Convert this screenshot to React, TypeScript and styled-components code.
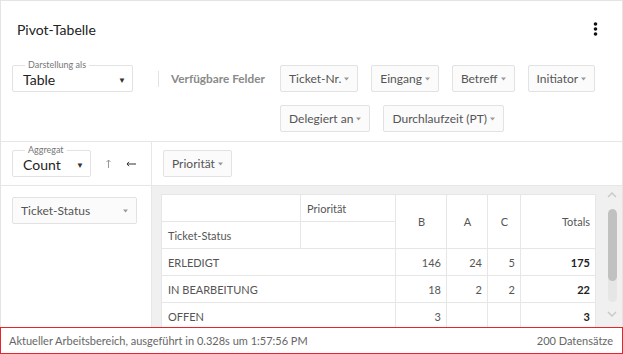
import React from "react";
import styled, { createGlobalStyle } from "styled-components";

const GlobalStyle = createGlobalStyle`
  html, body {
    margin: 0;
    padding: 0;
    background: #fff;
  }
  body {
    font-family: Lato, "Open Sans", sans-serif;
    color: #333;
  }
  #root {
    width: 623px;
    height: 354px;
    overflow: hidden;
  }
`;

const Page = styled.div`
  width: 623px;
  height: 354px;
  display: flex;
  flex-direction: column;
`;

const Card = styled.div`
  flex: 0 0 327px;
  box-sizing: border-box;
  border: 1px solid #e4e4e4;
  border-bottom: none;
  display: flex;
  flex-direction: column;
  overflow: hidden;
`;

const Header = styled.div`
  flex: 0 0 56px;
  display: flex;
  align-items: center;
  justify-content: space-between;
  padding: 0 24px 0 16px;
`;

const Title = styled.h1`
  margin: 0;
  font-size: 14px;
  font-weight: 400;
  color: #222;
`;

const Toolbar = styled.div`
  display: flex;
  align-items: flex-start;
  padding: 8px 12px 9px 11px;
  border-bottom: 1px solid #e6e6e6;
`;

const SelectBox = styled.div<{ $w: number }>`
  position: relative;
  box-sizing: border-box;
  width: ${(p) => p.$w}px;
  height: 27px;
  flex: none;
  border: 1px solid #e2e2e2;
  border-radius: 2px;
  display: flex;
  align-items: center;
  justify-content: space-between;
  padding: 2px 6px 0 10px;
  font-size: 14px;
  color: #222;
`;

const SelectLabel = styled.span`
  position: absolute;
  top: -7px;
  left: 12px;
  padding: 0 3px;
  background: #fff;
  font-size: 9px;
  line-height: 12px;
  color: #777;
`;

const SelectArrow = styled.span`
  font-size: 8px;
  color: #333;
`;

const Divider = styled.div`
  flex: none;
  width: 1px;
  height: 16px;
  margin: 6px 0 0 25px;
  background: #e2e2e2;
`;

const FieldsLabel = styled.div`
  flex: none;
  width: 109px;
  padding-left: 12px;
  line-height: 27px;
  font-size: 11.8px;
  font-weight: 700;
  color: #8a8a8a;
`;

const Chips = styled.div`
  flex: 1;
  display: flex;
  flex-wrap: wrap;
  gap: 13px;
`;

const Chip = styled.div<{ $w?: number }>`
  box-sizing: border-box;
  height: 27px;
  ${(p) => (p.$w ? `width: ${p.$w}px;` : "")}
  display: inline-flex;
  align-items: center;
  justify-content: space-between;
  padding: 0 8px;
  border: 1px solid #e2e2e2;
  border-radius: 2px;
  background: #fbfbfb;
  font-size: 12px;
  color: #555;
  white-space: nowrap;

  svg {
    margin-left: 3px;
    flex: none;
  }
`;

const Section = styled.div<{ $grow?: boolean }>`
  display: flex;
  ${(p) => (p.$grow ? "flex: 1; min-height: 0;" : "flex: none; border-bottom: 1px solid #e6e6e6;")}
`;

const SideCol = styled.div<{ $pt: number }>`
  flex: 0 0 151px;
  box-sizing: border-box;
  border-right: 1px solid #e6e6e6;
  padding: ${(p) => p.$pt}px 12px 8px 11px;
  display: flex;
  align-items: flex-start;
`;

const MainCol = styled.div`
  flex: 1;
  padding: 8px 11px;
  display: flex;
  align-items: flex-start;
`;

const SortButton = styled.span<{ $gap: number }>`
  display: flex;
  align-items: center;
  height: 27px;
  margin-left: ${(p) => p.$gap}px;
`;

const GrayArea = styled.div`
  flex: 1;
  min-width: 0;
  background: #f0f0f0;
  display: flex;
  overflow: hidden;
`;

const TableWrap = styled.div`
  flex: none;
  padding: 8px 0 0 9px;
  overflow: hidden;
`;

const PivotTable = styled.table`
  border-collapse: collapse;
  table-layout: fixed;
  width: 434px;
  background: #fff;
  font-size: 11px;
  color: #555;
`;

const Col = styled.col<{ $w: number }>`
  width: ${(p) => p.$w}px;
`;

const Cell = styled.td<{ $align?: string; $bold?: boolean }>`
  height: 27px;
  box-sizing: border-box;
  padding: 0 5px 0 6px;
  border: 1px solid #e6e6e6;
  text-align: ${(p) => p.$align || "left"};
  font-weight: ${(p) => (p.$bold ? 700 : 400)};
  color: ${(p) => (p.$bold ? "#222" : "#555")};
  white-space: nowrap;
  overflow: hidden;
`;

const HeadCell = styled(Cell).attrs({ as: "th" })``;

const ScrollBar = styled.div`
  flex: 0 0 28px;
  display: flex;
  flex-direction: column;
  align-items: center;
  padding: 6px 0 0 4px;
  box-sizing: border-box;
`;

const Track = styled.div`
  width: 9px;
  height: 93px;
  margin: 11px 0 9px;
  border-radius: 5px;
  background: #e6e6e6;
  overflow: hidden;
`;

const Thumb = styled.div`
  height: 72px;
  border-radius: 5px;
  background: #c1c1c1;
`;

const Footer = styled.div`
  flex: 0 0 27px;
  box-sizing: border-box;
  border: 1px solid #e8232b;
  display: flex;
  align-items: center;
  justify-content: space-between;
  padding: 0 9px 0 8px;
  font-size: 11px;
  color: #666;
`;

const Kebab = () => (
  <svg width="5" height="14" viewBox="0 0 5 14">
    <circle cx="2.5" cy="2" r="1.8" fill="#111" />
    <circle cx="2.5" cy="7" r="1.8" fill="#111" />
    <circle cx="2.5" cy="12" r="1.8" fill="#111" />
  </svg>
);

const Caret = () => (
  <svg width="5" height="4" viewBox="0 0 5 4">
    <path d="M0 0.5 H5 L2.5 3.5 Z" fill="#999" />
  </svg>
);

const ArrowUp = () => (
  <svg width="5" height="9" viewBox="0 0 5 9">
    <path d="M2.5 9 V1 M0.5 3 L2.5 1 L4.5 3" fill="none" stroke="#999" strokeWidth="1" />
  </svg>
);

const ArrowLeft = () => (
  <svg width="10" height="6" viewBox="0 0 10 6">
    <path d="M10 3 H1 M3 0.8 L1 3 L3 5.2" fill="none" stroke="#333" strokeWidth="1" />
  </svg>
);

const Chevron = ({ down }: { down?: boolean }) => (
  <svg width="10" height="6" viewBox="0 0 10 6">
    <path
      d={down ? "M1 1 L5 5 L9 1" : "M1 5 L5 1 L9 5"}
      fill="none"
      stroke="#c8c8c8"
      strokeWidth="1.4"
    />
  </svg>
);

const fields = ["Ticket-Nr.", "Eingang", "Betreff", "Initiator", "Delegiert an", "Durchlaufzeit (PT)"];

const rows = [
  { label: "ERLEDIGT", b: "146", a: "24", c: "5", total: "175" },
  { label: "IN BEARBEITUNG", b: "18", a: "2", c: "2", total: "22" },
  { label: "OFFEN", b: "3", a: "", c: "", total: "3" },
];

export default function App() {
  return (
    <Page>
      <GlobalStyle />
      <Card>
        <Header>
          <Title>Pivot-Tabelle</Title>
          <Kebab />
        </Header>
        <Toolbar>
          <SelectBox $w={121}>
            <SelectLabel>Darstellung als</SelectLabel>
            Table
            <SelectArrow>▼</SelectArrow>
          </SelectBox>
          <Divider />
          <FieldsLabel>Verfügbare Felder</FieldsLabel>
          <Chips>
            {fields.map((f) => (
              <Chip key={f}>
                {f}
                <Caret />
              </Chip>
            ))}
          </Chips>
        </Toolbar>
        <Section>
          <SideCol $pt={8}>
            <SelectBox $w={79}>
              <SelectLabel>Aggregat</SelectLabel>
              Count
              <SelectArrow>▼</SelectArrow>
            </SelectBox>
            <SortButton $gap={15}>
              <ArrowUp />
            </SortButton>
            <SortButton $gap={15}>
              <ArrowLeft />
            </SortButton>
          </SideCol>
          <MainCol>
            <Chip>
              Priorität
              <Caret />
            </Chip>
          </MainCol>
        </Section>
        <Section $grow>
          <SideCol $pt={11}>
            <Chip $w={125}>
              Ticket-Status
              <Caret />
            </Chip>
          </SideCol>
          <GrayArea>
            <TableWrap>
              <PivotTable>
                <colgroup>
                  <Col $w={139} />
                  <Col $w={95} />
                  <Col $w={51} />
                  <Col $w={41} />
                  <Col $w={33} />
                  <Col $w={75} />
                </colgroup>
                <thead>
                  <tr>
                    <HeadCell />
                    <HeadCell>Priorität</HeadCell>
                    <HeadCell rowSpan={2} $align="center">B</HeadCell>
                    <HeadCell rowSpan={2} $align="center">A</HeadCell>
                    <HeadCell rowSpan={2} $align="center">C</HeadCell>
                    <HeadCell rowSpan={2} $align="right">Totals</HeadCell>
                  </tr>
                  <tr>
                    <HeadCell>Ticket-Status</HeadCell>
                    <HeadCell />
                  </tr>
                </thead>
                <tbody>
                  {rows.map((r) => (
                    <tr key={r.label}>
                      <HeadCell colSpan={2}>{r.label}</HeadCell>
                      <Cell $align="right">{r.b}</Cell>
                      <Cell $align="right">{r.a}</Cell>
                      <Cell $align="right">{r.c}</Cell>
                      <Cell $align="right" $bold>{r.total}</Cell>
                    </tr>
                  ))}
                </tbody>
              </PivotTable>
            </TableWrap>
            <ScrollBar>
              <Chevron />
              <Track>
                <Thumb />
              </Track>
              <Chevron down />
            </ScrollBar>
          </GrayArea>
        </Section>
      </Card>
      <Footer>
        <span>Aktueller Arbeitsbereich, ausgeführt in 0.328s um 1:57:56 PM</span>
        <span>200 Datensätze</span>
      </Footer>
    </Page>
  );
}
